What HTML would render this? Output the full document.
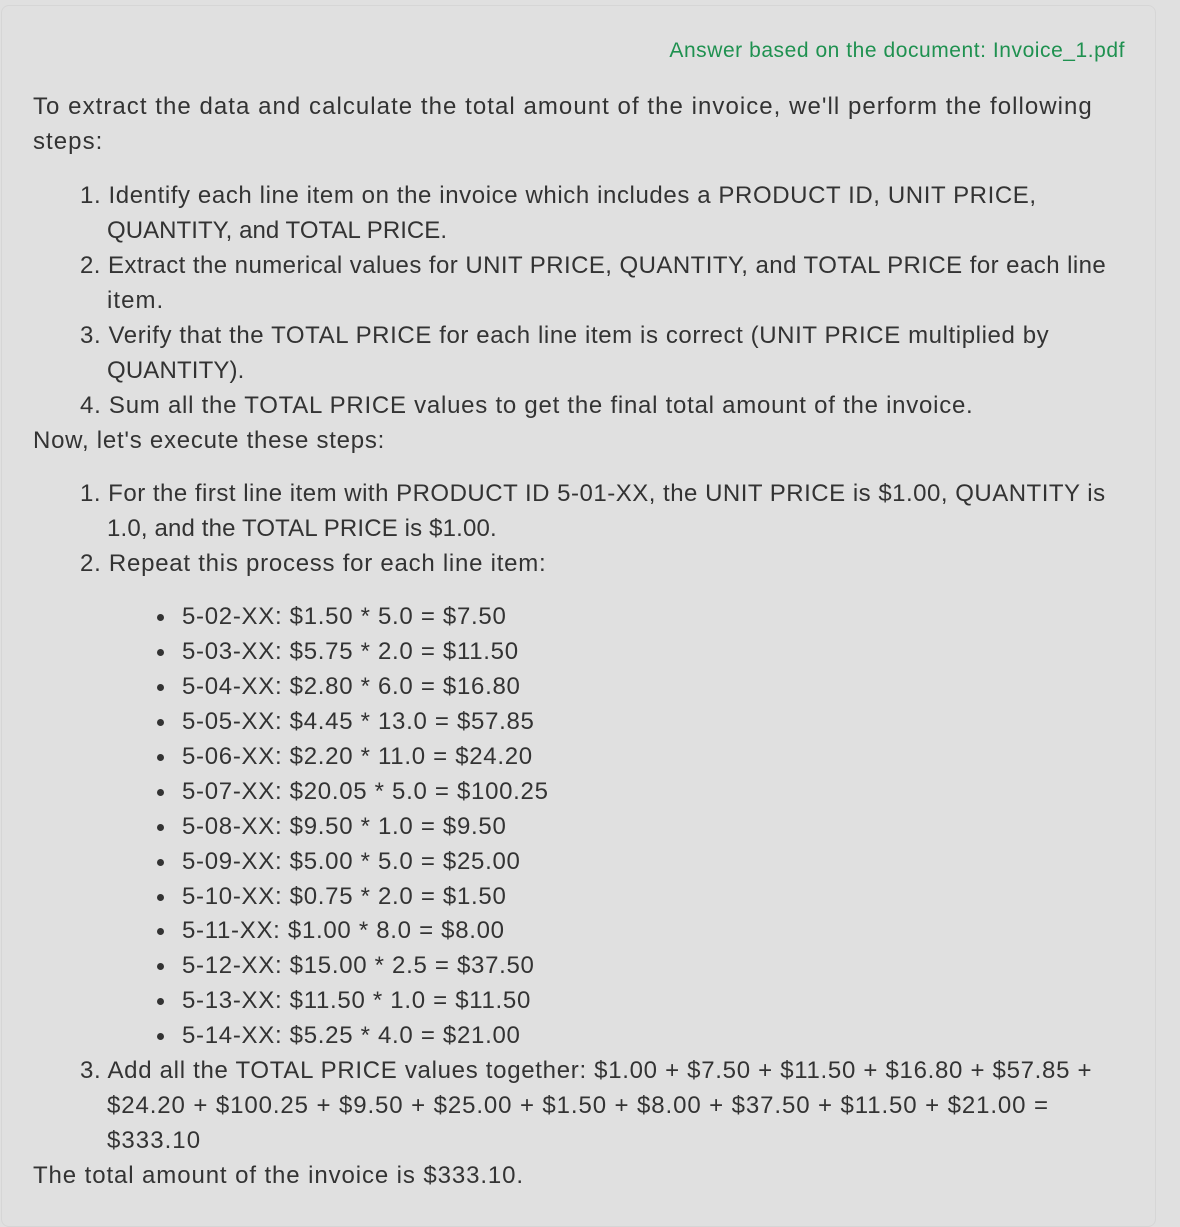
<!DOCTYPE html>
<html><head><style>
html,body{margin:0;padding:0;width:1180px;height:1204px;background:#e0e0e0;overflow:hidden}
.card{position:absolute;left:1px;top:5px;width:1153px;height:1220px;border:1px solid #d6d6d6;border-radius:8px;background:#e0e0e0}
.l{position:absolute;font-family:"Liberation Sans",sans-serif;font-size:24px;letter-spacing:1.05px;line-height:35px;color:#333;white-space:nowrap}
.u .l{letter-spacing:0.7px}
.g{position:absolute;right:55px;top:36px;font-family:"Liberation Sans",sans-serif;font-size:21px;letter-spacing:0.55px;line-height:30px;color:#1f9150;white-space:nowrap}
.b{position:absolute;width:7px;height:7px;border-radius:50%;background:#333}
</style></head><body>
<div class="card"></div>
<div class="g">Answer based on the document: Invoice_1.pdf</div>
<div class="l" style="left:33px;top:89px">To extract the data and calculate the total amount of the invoice, we'll perform the following</div>
<div class="l" style="left:33px;top:124px">steps:</div>
<div class="l" style="left:80px;top:178px;letter-spacing:0.6px">1. Identify each line item on the invoice which includes a PRODUCT ID, UNIT PRICE,</div>
<div class="l" style="left:107px;top:213px;letter-spacing:0.05px">QUANTITY, and TOTAL PRICE.</div>
<div class="l" style="left:80px;top:248px;letter-spacing:0.44px">2. Extract the numerical values for UNIT PRICE, QUANTITY, and TOTAL PRICE for each line</div>
<div class="l" style="left:107px;top:283px">item.</div>
<div class="l" style="left:80px;top:318px;letter-spacing:0.6px">3. Verify that the TOTAL PRICE for each line item is correct (UNIT PRICE multiplied by</div>
<div class="l" style="left:107px;top:353px;letter-spacing:0.15px">QUANTITY).</div>
<div class="l" style="left:80px;top:388px;letter-spacing:0.75px">4. Sum all the TOTAL PRICE values to get the final total amount of the invoice.</div>
<div class="l" style="left:33px;top:423px;letter-spacing:0.75px">Now, let's execute these steps:</div>
<div class="l" style="left:80px;top:476px;letter-spacing:0.5px">1. For the first line item with PRODUCT ID 5-01-XX, the UNIT PRICE is $1.00, QUANTITY is</div>
<div class="l" style="left:107px;top:511px;letter-spacing:0.15px">1.0, and the TOTAL PRICE is $1.00.</div>
<div class="l" style="left:80px;top:546px;letter-spacing:0.75px">2. Repeat this process for each line item:</div>
<div class="u">
<div class="b" style="left:157px;top:614px"></div><div class="l" style="left:182px;top:599px">5-02-XX: $1.50 * 5.0 = $7.50</div>
<div class="b" style="left:157px;top:649px"></div><div class="l" style="left:182px;top:634px">5-03-XX: $5.75 * 2.0 = $11.50</div>
<div class="b" style="left:157px;top:684px"></div><div class="l" style="left:182px;top:669px">5-04-XX: $2.80 * 6.0 = $16.80</div>
<div class="b" style="left:157px;top:719px"></div><div class="l" style="left:182px;top:704px">5-05-XX: $4.45 * 13.0 = $57.85</div>
<div class="b" style="left:157px;top:754px"></div><div class="l" style="left:182px;top:739px">5-06-XX: $2.20 * 11.0 = $24.20</div>
<div class="b" style="left:157px;top:789px"></div><div class="l" style="left:182px;top:774px">5-07-XX: $20.05 * 5.0 = $100.25</div>
<div class="b" style="left:157px;top:824px"></div><div class="l" style="left:182px;top:809px">5-08-XX: $9.50 * 1.0 = $9.50</div>
<div class="b" style="left:157px;top:859px"></div><div class="l" style="left:182px;top:844px">5-09-XX: $5.00 * 5.0 = $25.00</div>
<div class="b" style="left:157px;top:894px"></div><div class="l" style="left:182px;top:879px">5-10-XX: $0.75 * 2.0 = $1.50</div>
<div class="b" style="left:157px;top:928px"></div><div class="l" style="left:182px;top:913px">5-11-XX: $1.00 * 8.0 = $8.00</div>
<div class="b" style="left:157px;top:963px"></div><div class="l" style="left:182px;top:948px">5-12-XX: $15.00 * 2.5 = $37.50</div>
<div class="b" style="left:157px;top:998px"></div><div class="l" style="left:182px;top:983px">5-13-XX: $11.50 * 1.0 = $11.50</div>
<div class="b" style="left:157px;top:1033px"></div><div class="l" style="left:182px;top:1018px">5-14-XX: $5.25 * 4.0 = $21.00</div>
</div>
<div class="l" style="left:80px;top:1053px;letter-spacing:0.7px">3. Add all the TOTAL PRICE values together: $1.00 + $7.50 + $11.50 + $16.80 + $57.85 +</div>
<div class="l" style="left:107px;top:1088px;letter-spacing:0.9px">$24.20 + $100.25 + $9.50 + $25.00 + $1.50 + $8.00 + $37.50 + $11.50 + $21.00 =</div>
<div class="l" style="left:107px;top:1123px">$333.10</div>
<div class="l" style="left:33px;top:1158px;letter-spacing:0.9px">The total amount of the invoice is $333.10.</div>
</body></html>
